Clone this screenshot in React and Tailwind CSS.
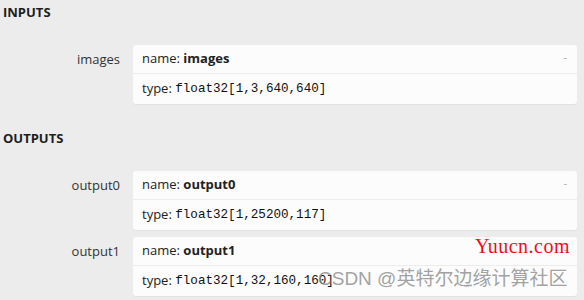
import React from 'react';

const inputs = [{ name: 'images', type: 'float32[1,3,640,640]' }];
const outputs = [
  { name: 'output0', type: 'float32[1,25200,117]' },
  { name: 'output1', type: 'float32[1,32,160,160]' },
];

function Section({ title, items, first }) {
  return (
    <div className={first ? '' : 'mt-[22px]'}>
      <div className="h-[24px] leading-[24px] px-[3px] font-bold text-[13px] text-[#1e1e1e]">{title}</div>
      <div className="mt-[21px] flex flex-col gap-[7px]">
        {items.map((item) => (
          <div key={item.name} className="flex items-start">
            <div className="w-[120px] shrink-0 h-[29px] leading-[29px] text-right text-[13px] text-[#333]">
              {item.name}
            </div>
            <div className="ml-[13px] mr-[7px] flex-1 bg-[#fcfcfc] rounded-[3px] shadow-[0_1px_0_#e2e2e2]">
              <div className="h-[29px] flex items-center pl-[9px] pr-[10px] border-b border-[#ececec] text-[13px] text-[#222]">
                <span>name:&nbsp;</span>
                <span className="font-bold">{item.name}</span>
                <span className="ml-auto text-[#aaa] text-[11px] -mt-[4px]">-</span>
              </div>
              <div className="h-[30px] flex items-center pl-[9px] text-[13px] text-[#222]">
                <span>type:&nbsp;</span>
                <span className="font-['Liberation_Mono',monospace] text-[12.6px] text-[#111]">{item.type}</span>
              </div>
            </div>
          </div>
        ))}
      </div>
    </div>
  );
}

export default function App() {
  return (
    <div className="relative w-[584px] h-[300px] overflow-hidden bg-[#ececec] font-['Open_Sans',sans-serif]">
      <Section title="INPUTS" items={inputs} first />
      <Section title="OUTPUTS" items={outputs} />
      <div className="absolute left-[475px] top-[234px] font-['Liberation_Serif',serif] text-[20px] leading-[24px] text-[#f20d1a] tracking-[0.5px]">
        Yuucn.com
      </div>
      <div className="absolute left-[318px] top-[266px] font-['Liberation_Sans','Noto_Sans_CJK_SC',sans-serif] text-[19px] leading-[26px] text-[#8a8a8a]/80 whitespace-nowrap">
        CSDN @英特尔边缘计算社区
      </div>
    </div>
  );
}
